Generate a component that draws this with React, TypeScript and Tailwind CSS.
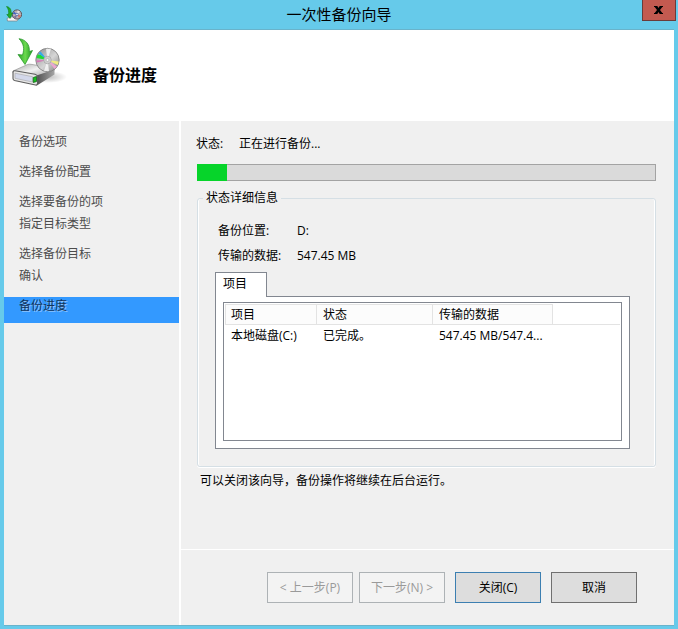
import clsx from "clsx";

const steps = [
  { label: "备份选项", gap: "pb-3" },
  { label: "选择备份配置", gap: "pb-3" },
  { label: "选择要备份的项", gap: "pb-1" },
  { label: "指定目标类型", gap: "pb-3" },
  { label: "选择备份目标", gap: "pb-1" },
  { label: "确认", gap: "pb-3" },
  { label: "备份进度", gap: "pb-2", current: true },
];

const progress = 30 / 459;

function BackupIcon({ className }: { className?: string }) {
  return (
    <svg viewBox="0 0 56 50" className={className} aria-hidden="true">
      <defs>
        <linearGradient id="arrow" x1="0" y1="0" x2="1" y2="0">
          <stop offset="0" stopColor="#2ba42c" />
          <stop offset="0.5" stopColor="#6bd94e" />
          <stop offset="1" stopColor="#1f9a22" />
        </linearGradient>
        <linearGradient id="top" x1="0" y1="0" x2="1" y2="1">
          <stop offset="0" stopColor="#a9a9a9" />
          <stop offset="0.45" stopColor="#f1f1f1" />
          <stop offset="1" stopColor="#8f8f8f" />
        </linearGradient>
        <linearGradient id="side" x1="0" y1="0" x2="1" y2="0">
          <stop offset="0" stopColor="#4e4e4e" />
          <stop offset="1" stopColor="#a5a5a5" />
        </linearGradient>
        <linearGradient id="disc" x1="0" y1="0" x2="1" y2="1">
          <stop offset="0" stopColor="#8a8a8a" />
          <stop offset="0.3" stopColor="#b5b5b5" />
          <stop offset="0.55" stopColor="#d6d6d6" />
          <stop offset="1" stopColor="#7e7e7e" />
        </linearGradient>
        <radialGradient id="shade">
          <stop offset="0" stopColor="#000" stopOpacity="0.25" />
          <stop offset="1" stopColor="#000" stopOpacity="0" />
        </radialGradient>
      </defs>
      <ellipse cx="36" cy="39" rx="19" ry="6" fill="url(#shade)" />
      {/* drive */}
      <path d="M1 33 15.500 26.500Q17 26 19 26.300L41 30Q43 30.500 42.500 32L25 40 1 35Z" fill="url(#top)" stroke="#8c8c8c" strokeWidth="0.6" />
      <path d="M24.500 37.500 42.500 31.500V36.500L26.500 46.500Q25 47.500 24 47Z" fill="url(#side)" />
      <path d="M1 34.500Q1 32.500 3 32.800L23 36.300Q25.500 37 25.500 39V45Q25.500 47.500 23.500 47L2.500 42.500Q1 42 1 40.500Z" fill="#e6e6e6" stroke="#5c5c5c" strokeWidth="1.100" />
      <path d="M3 35.200 20.500 38.700V44L3 40.300Z" fill="#d3d8ea" stroke="#a4a4a8" strokeWidth="0.6" />
      <path d="M21.300 39.500 24.500 38.500V43.500L21.300 44.500Z" fill="#12c51b" stroke="#135f16" strokeWidth="0.8" />
      {/* disc */}
      <circle cx="35.500" cy="22" r="11.700" fill="url(#disc)" stroke="#7c7c7c" strokeWidth="0.8" />
      <path d="M35.500 22 34 10.700 39 10.800Z" fill="#fff" opacity="0.75" />
      <path d="M35.500 22 32 33 37 33.300Z" fill="#fff" opacity="0.75" />
      <path d="M35.500 22 24.500 20 25.500 16.500 29 17Z" fill="#1fdc33" />
      <path d="M35.500 22 26.500 15.500 28.500 13.500Z" fill="#35a9e8" />
      <path d="M35.500 22 24.300 22.500 24.800 24.500Z" fill="#d774b6" />
      <path d="M35.500 22 46.800 23.500 45.800 27Z" fill="#f1ec80" />
      <path d="M35.500 22 45 28.500 42.500 31Z" fill="#eda5d0" />
      <circle cx="35.500" cy="22" r="3.800" fill="#cfcfcf" stroke="#a2a2a2" strokeWidth="0.7" />
      <circle cx="35.500" cy="22" r="1.500" fill="#f5f5f5" stroke="#999" strokeWidth="0.5" />
      {/* arrow */}
      <path d="M7 0.700C14 1.500 18 7 17.300 13.500L20.500 12.500 13 26.500 6 16.500 10.500 17C12.500 11 12 6 7 0.700Z" fill="url(#arrow)" stroke="#1f9023" strokeWidth="0.7" strokeLinejoin="round" />
    </svg>
  );
}

function SmallBackupIcon({ className }: { className?: string }) {
  return (
    <svg viewBox="0 0 16 16" className={className} aria-hidden="true">
      <path d="M1 12.500 4 11H12V13.500L11 15H1.500Z" fill="#f4f4f4" stroke="#7a7f83" strokeWidth="0.7" />
      <circle cx="11" cy="8.500" r="4.600" fill="#b9b2b6" stroke="#5b4f55" strokeWidth="1" />
      <path d="M11 8.500 6.900 8 8 5.500Z" fill="#3f63c4" />
      <path d="M11 8.500 11.500 4.300 14 5.600Z" fill="#e6e2e4" />
      <path d="M11 8.500 15 9.500 13 12Z" fill="#d3766a" />
      <path d="M11 8.500 10 12.500 7.500 11Z" fill="#7b6fa0" />
      <circle cx="11" cy="8.500" r="1.200" fill="#fff" stroke="#3c56a8" strokeWidth="0.7" />
      <path d="M0.500 0.500C4 1 5.500 4 5 7H6.500L4 12.500 0.800 8.500H2.500C3 5.500 2.500 3 0.500 0.500Z" fill="#1fae28" stroke="#0f7f1a" strokeWidth="0.6" />
    </svg>
  );
}

function TitleBar() {
  return (
    <div className="-mr-[2px] flex h-[29px] items-start justify-between pl-[2px]">
      <SmallBackupIcon className="mt-[6px] size-4" />
      <h1 className="ml-[14px] pt-1 text-[15px] leading-5">一次性备份向导</h1>
      <button
        type="button"
        aria-label="Close"
        className="flex h-[21px] w-[34px] items-center justify-center border border-t-0 border-[#6b3b3a] bg-[#c35a50]"
      >
        <svg viewBox="0 0 9 8" className="h-2 w-[9px]" aria-hidden="true">
          <path d="M0 0H3.300L4.500 2 5.700 0H9V1H8.300L6 4 8.300 7H9V8H5.700L4.500 6 3.300 8H0V7H.7L3 4 .7 1H0Z" fill="#000" />
        </svg>
      </button>
    </div>
  );
}

function Sidebar() {
  return (
    <nav className="w-[177px] shrink-0 border-r-2 border-white pt-3">
      <ol>
        {steps.map((s) => (
          <li
            key={s.label}
            aria-current={s.current ? "step" : undefined}
            className={clsx(
              "pl-[15px] leading-[18px]",
              s.gap,
              s.current ? "bg-[#3399ff] text-[#12335c] [text-shadow:1px_1px_0_#8cc4ff]" : "text-[#4c4c4c]"
            )}
          >
            {s.label}
          </li>
        ))}
      </ol>
    </nav>
  );
}

function ItemsTable() {
  return (
    <div className="h-[139px] border border-[#828790] bg-white p-px">
      <table className="w-full table-fixed border-separate border-spacing-0 text-left">
        <thead>
          <tr className="h-[21px] leading-4">
            <th className="w-[92px] border border-[#e3e3e3] bg-[#fcfcfc] p-0 pl-[5px] font-normal">项目</th>
            <th className="w-[116px] border-y border-r border-[#e3e3e3] bg-[#fcfcfc] p-0 pl-[6px] font-normal">状态</th>
            <th className="w-[120px] border-y border-r border-[#e3e3e3] bg-[#fcfcfc] p-0 pl-[6px] font-normal">传输的数据</th>
            <td className="border-b border-[#e3e3e3] p-0" />
          </tr>
        </thead>
        <tbody>
          <tr className="h-[22px] whitespace-nowrap leading-4">
            <td className="p-0 pl-[6px]">本地磁盘(C:)</td>
            <td className="p-0 pl-[6px]">已完成。</td>
            <td className="p-0 pl-[6px]">547.45 MB/547.4...</td>
            <td className="p-0" />
          </tr>
        </tbody>
      </table>
    </div>
  );
}

function Details() {
  return (
    <fieldset className="mt-[9px] ml-px min-w-0 rounded-[3px] border border-[#d5dfe5] px-[17px] pb-[17px] shadow-[0_1px_0_#fff,inset_1px_0_0_#fff,inset_-1px_0_0_#fff]">
      <legend className="-ml-3 px-[3px] leading-4">状态详细信息</legend>
      <dl className="mt-[17px] grid grid-cols-[79px_1fr] gap-y-[9px] pl-[3px] leading-4">
        <dt>备份位置:</dt>
        <dd>D:</dd>
        <dt>传输的数据:</dt>
        <dd>547.45 MB</dd>
      </dl>
      <div className="mt-2 mr-2">
        <div role="tablist" className="relative -mb-px flex">
          <button
            type="button"
            role="tab"
            id="tab-items"
            aria-selected="true"
            aria-controls="panel-items"
            className="h-[25px] w-[52px] border border-b-0 border-[#828790] bg-white pb-[2px] pl-[7px] text-left leading-4"
          >
            项目
          </button>
        </div>
        <div role="tabpanel" id="panel-items" aria-labelledby="tab-items" className="border border-[#828790] bg-white px-[7px] pt-[5px] pb-[7px]">
          <ItemsTable />
        </div>
      </div>
    </fieldset>
  );
}

function Footer() {
  const base = "h-[31px] w-[86px] border leading-4";
  return (
    <footer className="flex justify-end border-t border-white py-[22px] pr-[37px]">
      <button type="button" disabled className={clsx(base, "border-[#adb2b5] bg-[#f3f3f3] text-[#9a9a9a]")}>
        &lt; 上一步(P)
      </button>
      <button type="button" disabled className={clsx(base, "ml-[6px] border-[#adb2b5] bg-[#f3f3f3] text-[#9a9a9a]")}>
        下一步(N) &gt;
      </button>
      <button type="button" className={clsx(base, "ml-[10px] border-[#3c7fb1] bg-[#dddddd]")}>
        关闭(C)
      </button>
      <button type="button" className={clsx(base, "ml-[10px] border-[#707070] bg-[#dddddd]")}>
        取消
      </button>
    </footer>
  );
}

export default function App() {
  return (
    <div className="flex min-h-screen flex-col bg-[#66caea] px-1 pb-[3px] font-['Open_Sans','Noto_Sans_CJK_SC',sans-serif] text-[12px] text-black">
      <TitleBar />
      <div className="flex flex-1 flex-col border-y border-[#69b3cb] bg-[#f0f0f0]">
        <header className="flex h-[91px] items-start bg-white pt-2 pl-2">
          <BackupIcon className="h-[50px] w-14" />
          <h2 className="mt-[25px] ml-[25px] text-[16px] leading-6 font-bold">备份进度</h2>
        </header>
        <div className="flex flex-1">
          <Sidebar />
          <div className="flex min-w-0 flex-1 flex-col">
            <main className="flex-1 pt-[15px] pr-[18px] pl-[15px]">
              <div className="flex leading-4">
                <span id="status-label" className="w-[43px]">状态:</span>
                <span>正在进行备份...</span>
              </div>
              <div
                role="progressbar"
                aria-labelledby="status-label"
                aria-valuemin={0}
                aria-valuemax={100}
                aria-valuenow={Math.round(progress * 100)}
                className="mt-3 ml-px h-[17px] bg-[#dadada] shadow-[inset_0_0_0_1px_#a3a3a3]"
              >
                <div className="h-full bg-[#06d42a]" style={{ width: `${progress * 100}%` }} />
              </div>
              <Details />
              <p className="mt-[6px] pl-[4px] leading-4">可以关闭该向导，备份操作将继续在后台运行。</p>
            </main>
            <Footer />
          </div>
        </div>
      </div>
    </div>
  );
}
